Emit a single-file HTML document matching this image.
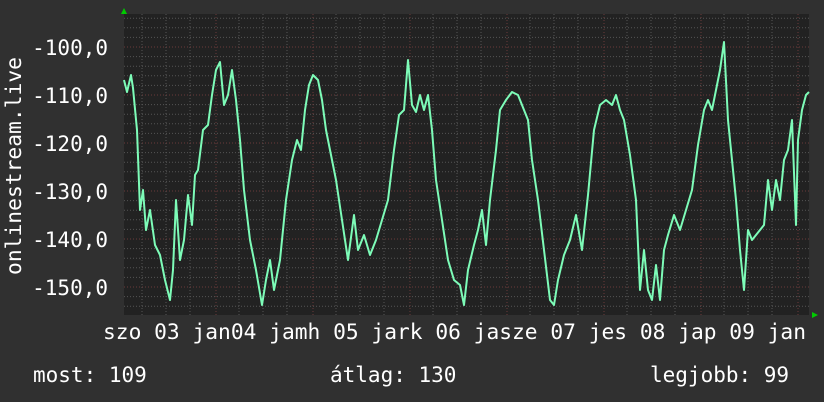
<!DOCTYPE html>
<html><head><meta charset="utf-8"><style>
html,body{margin:0;padding:0;background:#303030;width:824px;height:402px;overflow:hidden}
svg{display:block}
text{font-family:"DejaVu Sans Mono","Liberation Mono",monospace;fill:#fff}
</style></head><body>
<svg width="824" height="402" viewBox="0 0 824 402">
<rect width="824" height="402" fill="#303030"/>
<rect x="124" y="14" width="685" height="301" fill="#222"/>
<g stroke="#555" stroke-width="1" stroke-dasharray="1,2">
<path d="M142 14V315M166 14V315M190 14V315M239 14V315M263 14V315M287 14V315M336 14V315M360 14V315M384 14V315M433 14V315M457 14V315M481 14V315M530 14V315M554 14V315M578 14V315M627 14V315M651 14V315M675 14V315M724 14V315M748 14V315M772 14V315"/>
<path d="M124 18.2H809M124 27.8H809M124 37.4H809M124 56.6H809M124 66.2H809M124 75.8H809M124 85.4H809M124 104.6H809M124 114.2H809M124 123.8H809M124 133.4H809M124 152.6H809M124 162.2H809M124 171.8H809M124 181.4H809M124 200.6H809M124 210.2H809M124 219.8H809M124 229.4H809M124 248.6H809M124 258.2H809M124 267.8H809M124 277.4H809M124 296.6H809M124 306.2H809"/>
</g>
<g stroke="#6a3a3a" stroke-width="1" stroke-dasharray="1,2">
<path d="M216 14V315M313 14V315M410 14V315M507 14V315M604 14V315M701 14V315M798 14V315"/>
<path d="M124 47H809M124 95H809M124 143H809M124 191H809M124 239H809M124 287H809"/>
</g>
<polygon points="121,14 127,14 124,8" fill="#0c0"/>
<polygon points="812,312 812,318 818,315" fill="#0c0"/>
<polyline fill="none" stroke="#7dfcb8" stroke-width="2" stroke-linejoin="round" points="124,80 127,92 131,75 133,88 137,130 140,210 143,190 146,230 150,210 155,245 160,255 165,280 170,300 173,270 176,200 180,260 184,240 188,195 192,225 195,175 198,170 203,130 208,125 212,95 216,70 220,62 224,105 228,95 232,70 236,100 240,140 244,190 250,240 256,270 262,305 266,280 270,260 274,290 280,260 286,200 292,160 297,140 301,150 305,110 309,85 313,75 318,80 322,100 326,130 330,150 336,180 342,220 348,260 354,215 358,250 364,235 370,255 376,240 382,220 388,200 394,150 399,115 404,110 408,60 412,105 416,112 420,95 424,110 428,95 432,130 436,180 442,220 448,260 454,280 460,285 464,305 468,270 474,245 478,230 482,210 486,245 490,200 496,150 500,110 506,100 512,92 518,95 524,110 528,120 532,160 538,200 544,250 550,300 554,305 558,280 564,255 570,240 576,215 582,250 588,195 594,130 600,105 606,100 612,105 616,95 620,110 624,120 630,155 636,200 640,290 644,250 648,290 652,300 656,265 660,300 664,250 668,235 674,215 680,230 686,210 692,190 698,145 704,110 708,100 712,110 716,90 720,70 724,42 728,120 732,160 736,200 740,250 744,290 748,230 752,240 756,235 760,230 764,225 768,180 772,210 776,180 780,200 784,160 788,150 792,120 796,225 798,140 802,110 806,95 809,92"/>
<g font-size="21" text-anchor="end">
<text x="108" y="55">-100,0</text>
<text x="108" y="103">-110,0</text>
<text x="108" y="151">-120,0</text>
<text x="108" y="199">-130,0</text>
<text x="108" y="247">-140,0</text>
<text x="108" y="295">-150,0</text>
</g>
<text font-size="21" transform="translate(21,275) rotate(-90)" textLength="218" lengthAdjust="spacingAndGlyphs">onlinestream.live</text>
<text x="103" y="339" font-size="21" textLength="703" lengthAdjust="spacingAndGlyphs">szo 03 jan04 jamh 05 jark 06 jasze 07 jes 08 jap 09 jan</text>
<g font-size="21">
<text x="33" y="382">most: 109</text>
<text x="330" y="382">átlag: 130</text>
<text x="650" y="382">legjobb: 99</text>
</g>
</svg>
</body></html>
